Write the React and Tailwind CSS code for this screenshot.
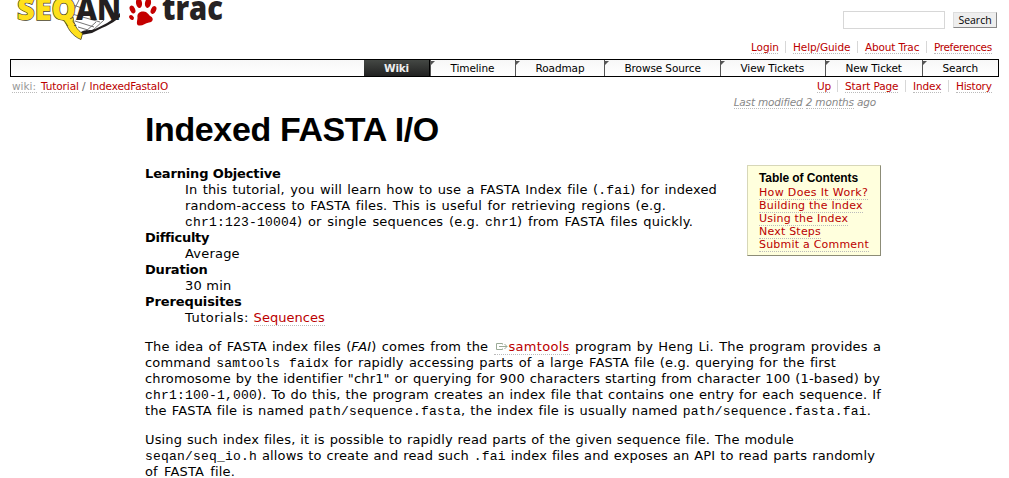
import React from "react";

const link = "text-[#bb0000] border-b border-dotted border-[#bbbbbb]";

function Line({ w, children }) {
  return (
    <span className="block h-4 whitespace-nowrap" style={{ width: w, textAlignLast: "justify" }}>
      {children}
    </span>
  );
}

function Code({ children }) {
  return <code className="font-['Liberation_Mono',monospace] text-[13px] tracking-[0.2px]">{children}</code>;
}

function Logo() {
  return (
    <svg width="230" height="42" viewBox="0 0 230 42" className="block">
      <path d="M68 0C72 20 80 32 90 32C101 29 112 24 120 12L125 -2H70Z" fill="#fff" />
      <path d="M72 14L100 22M75 21L94 27M78 27L88 30M96 22L84 33M104 20L92 31M79 0L72 14M70 4L82 8" fill="none" stroke="#666" strokeWidth=".9" />
      <path d="M81 32C86 29 90 31 95 29C104 25 110 22 120 13L120 17C111 25 101 28 92 33L81 35Z" fill="#231f20" />
      <path d="M64 18C67 28 72 36 81 39.500L82.500 33.500C77 30 74 25 73 17Z" fill="#ffe01b" stroke="#494225" strokeWidth=".8" />
      <g fontFamily="Open Sans, sans-serif" fontWeight="800" fontSize="30">
        <text x="17" y="20" textLength="59" lengthAdjust="spacingAndGlyphs" fill="#ffe01b" stroke="#494225" strokeWidth="1.4" paintOrder="stroke">SEQ</text>
        <text x="76" y="20" textLength="45" lengthAdjust="spacingAndGlyphs" fill="#231f20">AN</text>
      </g>
      <path d="M66 19.500C68 28 73 35 80.500 38.500L81.500 34C76 30 73 25 72 19Z" fill="#ffe01b" />
      <g fill="#c40000">
        <path d="M143 11.500C147 11 148.500 15 151 16.500C154 18.500 153 22 149 22.500C145 23 143 26 139 25.500C135.500 25 137.500 20.500 137.500 17.500C137 14 139 11.500 143 11.500Z" />
        <ellipse cx="132.500" cy="9.500" rx="2.600" ry="4" transform="rotate(-25 132.500 9.500)" />
        <ellipse cx="139" cy="3" rx="3" ry="5" transform="rotate(-8 139 3)" />
        <ellipse cx="148" cy="3" rx="3" ry="5" transform="rotate(10 148 3)" />
        <ellipse cx="153.500" cy="10" rx="2.600" ry="4" transform="rotate(25 153.500 10)" />
        <ellipse cx="131.500" cy="17.500" rx="2" ry="2.800" transform="rotate(-45 131.500 17.500)" />
      </g>
      <text x="162" y="20" textLength="61" lengthAdjust="spacingAndGlyphs" fontFamily="Open Sans, sans-serif" fontWeight="800" fontSize="33" fill="#262223">trac</text>
    </svg>
  );
}

function Tab({ w, tw, children }) {
  return (
    <div className="flex h-4 border-l border-[#555]" style={{ width: w }}>
      <svg width="4" height="4" className="mt-px shrink-0"><path d="M0 0H4L0 4Z" fill="#555" /></svg>
      <span className="-ml-[6px] flex flex-1 justify-center">
        <span className="whitespace-nowrap tracking-[-0.1px]" style={{ width: tw, textAlignLast: "justify" }}>{children}</span>
      </span>
    </div>
  );
}

function Links({ items }) {
  return (
    <div className="flex">
      {items.map(([label, w, spacing]) => (
        <div key={label} className="group flex">
          <i className="mx-[7px] h-3 w-px bg-[#d7d7d7] group-first:hidden" />
          <a className={link + " h-[13px] whitespace-nowrap leading-[13px]"} style={{ width: w, letterSpacing: spacing }}>{label}</a>
        </div>
      ))}
    </div>
  );
}

export default function App() {
  return (
    <div className="relative h-[478px] w-[1009px] overflow-hidden bg-white font-['DejaVu_Sans',sans-serif] text-[13px] leading-4 text-black">
      <header className="flex h-[59px] justify-between pr-3 text-[10.5px]">
        <Logo />
        <div className="flex flex-col items-end">
          <form className="flex h-[41px] pt-[11px]">
            <input className="mr-2 h-[18px] w-[102px] border border-[#d7d7d7]" />
            <button type="button" className="mt-px h-4 w-11 border border-[#ddd] border-r-[#888] border-b-[#888] bg-[#eee] font-['Open_Sans',sans-serif] text-[10.5px] leading-[14px]">Search</button>
          </form>
          <div className="pr-[5px]"><Links items={[["Login", 27, -0.1], ["Help/Guide", 57, -0.1], ["About Trac", 54, -0.15], ["Preferences", 58, -0.36]]} /></div>
        </div>
      </header>
      <nav className="mx-[10px] flex h-[18px] w-[989px] justify-end border border-black bg-linear-to-b from-[#f7f7f7] to-white text-[10.5px] leading-4">
        <div className="flex h-4 w-[66px] justify-center border-r border-black bg-linear-to-b from-[#444844] to-[#222] font-bold tracking-[-0.2px] text-[#eee]">Wiki</div>
        <Tab w={85} tw={43}>Timeline</Tab>
        <Tab w={89} tw={47}>Roadmap</Tab>
        <Tab w={116} tw={74}>Browse Source</Tab>
        <Tab w={105} tw={63}>View Tickets</Tab>
        <Tab w={97} tw={55}>New Ticket</Tab>
        <Tab w={76} tw={34}>Search</Tab>
      </nav>
      <div className="flex h-[17px] justify-between pt-[3px] pr-[17px] pl-3 text-[10.5px] leading-[13px]">
        <div className="flex text-[#666]">
          <a className="mr-1 h-[13px] w-[25px] border-b border-dotted border-[#bbb] text-[#999]">wiki:</a>
          <a className={link + " mr-[3px] h-[13px] w-[38px] tracking-[-0.1px]"}>Tutorial</a>/
          <a className={link + " ml-1 h-[13px] w-[79px] tracking-[-0.15px]"}>IndexedFastaIO</a>
        </div>
        <Links items={[["Up", 13, -0.1], ["Start Page", 53, -0.1], ["Index", 28, -0.1], ["History", 36, -0.25]]} />
      </div>
      <div className="flex h-4 justify-end pt-[2px] pr-[133px] text-[10.5px] leading-[13px] tracking-[-0.18px] text-[#888] italic">
        <span className="h-[13px] border-b border-dotted border-[#bbb]">Last modified</span>&nbsp;
        <span className="h-[13px] border-b border-dotted border-[#bbb]">2 months</span>&nbsp;ago
      </div>
      <main className="ml-[145px] w-[736px]">
        <h1 className="h-[55px] font-['Liberation_Sans',sans-serif] text-[34px] leading-[38px] font-bold tracking-[-0.38px]">Indexed FASTA I/O</h1>
        <div className="flex h-[174px] justify-between">
          <dl className="mt-px">
            <dt className="font-bold tracking-[-0.15px]">Learning Objective</dt>
            <dd className="ml-10 tracking-[0.16px]">
              <Line w={532}>In this tutorial, you will learn how to use a FASTA Index file (<Code>.fai</Code>) for indexed</Line>
              <Line w={481}>random-access to FASTA files. This is useful for retrieving regions (e.g.</Line>
              <Line w={508}><Code>chr1:123-10004</Code>) or single sequences (e.g. <Code>chr1</Code>) from FASTA files quickly.</Line>
            </dd>
            <dt className="font-bold tracking-[-0.3px]">Difficulty</dt>
            <dd className="ml-10 tracking-[0.2px]">Average</dd>
            <dt className="font-bold tracking-[-0.2px]">Duration</dt>
            <dd className="ml-10 tracking-[0.2px]">30 min</dd>
            <dt className="font-bold tracking-[-0.1px]">Prerequisites</dt>
            <dd className="ml-10"><span className="tracking-[0.5px]">Tutorials: </span><a className={link + " tracking-[0.05px]"}>Sequences</a></dd>
          </dl>
          <aside className="h-[91px] w-[134px] border border-[#d7d7b8] border-r-[#8c8c77] border-b-[#8c8c77] bg-[#ffffdd] pt-[5px] pl-[11px] text-[11px] leading-[13px]">
            <h4 className="h-[15px] font-['Liberation_Sans',sans-serif] text-[12px] leading-[14px] font-bold tracking-[-0.08px]">Table of Contents</h4>
            <ul>
              <li className="h-[13px] tracking-[0.34px]"><a className={link}>How Does It Work?</a></li>
              {["Building the Index", "Using the Index", "Next Steps", "Submit a Comment"].map((t) => (
                <li key={t} className="h-[13px] tracking-[0.21px]"><a className={link}>{t}</a></li>
              ))}
            </ul>
          </aside>
        </div>
        <div className="mb-[13px] tracking-[0.14px]">
          <Line w={736}>The idea of FASTA index files (<em>FAI</em>) comes from the <a className={link + " tracking-[0.3px]"}><svg width="15" height="9" viewBox="0 0 15 9" className="inline align-baseline"><path d="M8.500 2.500V1.500H2.500V7.500H8.500V6.500M5 4.500H13M10.500 2L13 4.500L10.500 7" fill="none" stroke="#9aaa96" /></svg>samtools</a> program by Heng Li. The program provides a</Line>
          <Line w={691}>command <Code>samtools faidx</Code> for rapidly accessing parts of a large FASTA file (e.g. querying for the first</Line>
          <Line w={735}>chromosome by the identifier "chr1" or querying for 900 characters starting from character 100 (1-based) by</Line>
          <Line w={736}><Code>chr1:100-1,000</Code>). To do this, the program creates an index file that contains one entry for each sequence. If</Line>
          <Line w={726}>the FASTA file is named <Code>path/sequence.fasta</Code>, the index file is usually named <Code>path/sequence.fasta.fai</Code>.</Line>
        </div>
        <div className="tracking-[0.14px]">
          <Line w={649}>Using such index files, it is possible to rapidly read parts of the given sequence file. The module</Line>
          <Line w={730}><Code>seqan/seq_io.h</Code> allows to create and read such <Code>.fai</Code> index files and exposes an API to read parts randomly</Line>
          <Line w={90}>of FASTA file.</Line>
        </div>
      </main>
    </div>
  );
}
